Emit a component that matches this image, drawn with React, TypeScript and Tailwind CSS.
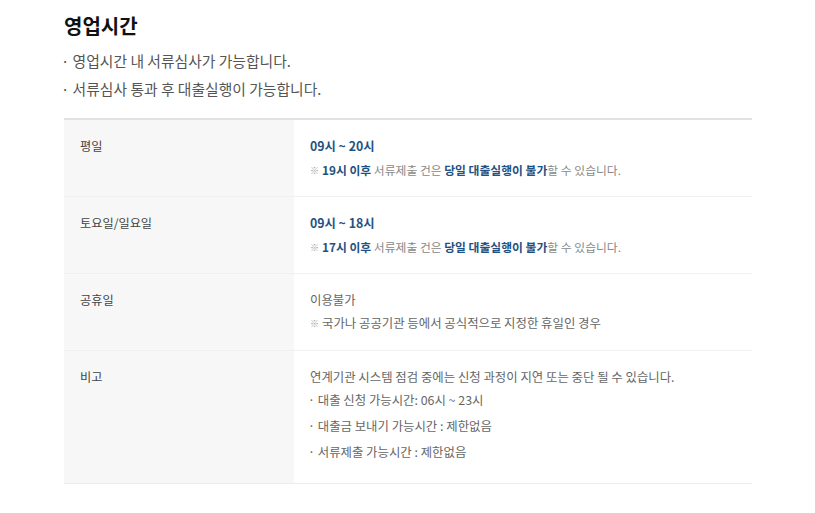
import React from "react";

const font = { fontFamily: '"Noto Sans CJK KR", "Noto Sans", sans-serif' };

function Row({ label, children, last }: { label: string; children: React.ReactNode; last?: boolean }) {
  return (
    <div className={`flex ${last ? "border-b border-[#ececec]" : "border-b border-[#f0f0f0]"}`}>
      <div className="w-[230px] shrink-0 bg-[#f7f7f7] pl-4 pt-[15px] text-[12.2px] leading-[23px] text-[#444]">{label}</div>
      <div className="flex-1 bg-white pl-4">{children}</div>
    </div>
  );
}

function Mark() {
  return <span className="mr-[3px] text-[9px] leading-none text-[#999] align-[1px]">※</span>;
}

export default function App() {
  return (
    <div className="w-[815px] h-[513px] bg-white" style={font}>
      <div className="pl-16 w-[752px]">
        <h1 className="pt-[10px] text-[20px] font-bold leading-[31px] text-[#111]">영업시간</h1>
        <div className="mt-[6px] text-[14.8px] text-[#555] leading-[28px]">
          <p className="h-[28px] -ml-[3px]">· 영업시간 내 서류심사가 가능합니다.</p>
          <p className="h-[28px] -ml-[3px]">· 서류심사 통과 후 대출실행이 가능합니다.</p>
        </div>
        <div className="mt-[15px] border-t-2 border-[#e2e2e2]">
          <Row label="평일">
            <div className="py-[15px]">
              <div className="h-[23px] text-[12.3px] font-bold leading-[23px] text-[#1f5282]">09시 ~ 20시</div>
              <div className="h-[23px] text-[11.8px] leading-[23px] text-[#888]">
                <Mark />
                <b className="text-[#1f5282]">19시 이후</b> 서류제출 건은 <b className="text-[#1f5282]">당일 대출실행이 불가</b>할 수 있습니다.
              </div>
            </div>
          </Row>
          <Row label="토요일/일요일">
            <div className="py-[15px]">
              <div className="h-[23px] text-[12.3px] font-bold leading-[23px] text-[#1f5282]">09시 ~ 18시</div>
              <div className="h-[23px] text-[11.8px] leading-[23px] text-[#888]">
                <Mark />
                <b className="text-[#1f5282]">17시 이후</b> 서류제출 건은 <b className="text-[#1f5282]">당일 대출실행이 불가</b>할 수 있습니다.
              </div>
            </div>
          </Row>
          <Row label="공휴일">
            <div className="py-[15px] text-[12.4px] leading-[23px] text-[#666]">
              <div className="h-[23px]">이용불가</div>
              <div className="h-[23px]"><Mark />국가나 공공기관 등에서 공식적으로 지정한 휴일인 경우</div>
            </div>
          </Row>
          <Row label="비고" last>
            <div className="pt-[15px] pb-[20px] text-[12.4px] text-[#666]">
              <div className="h-[23px] leading-[23px]">연계기관 시스템 점검 중에는 신청 과정이 지연 또는 중단 될 수 있습니다.</div>
              <div className="h-[22px] leading-[22px] -ml-[2px]">· 대출 신청 가능시간: 06시 ~ 23시</div>
              <div className="mt-[4px] h-[22px] leading-[22px] -ml-[2px]">· 대출금 보내기 가능시간 : 제한없음</div>
              <div className="mt-[4px] h-[22px] leading-[22px] -ml-[2px]">· 서류제출 가능시간 : 제한없음</div>
            </div>
          </Row>
        </div>
      </div>
    </div>
  );
}
